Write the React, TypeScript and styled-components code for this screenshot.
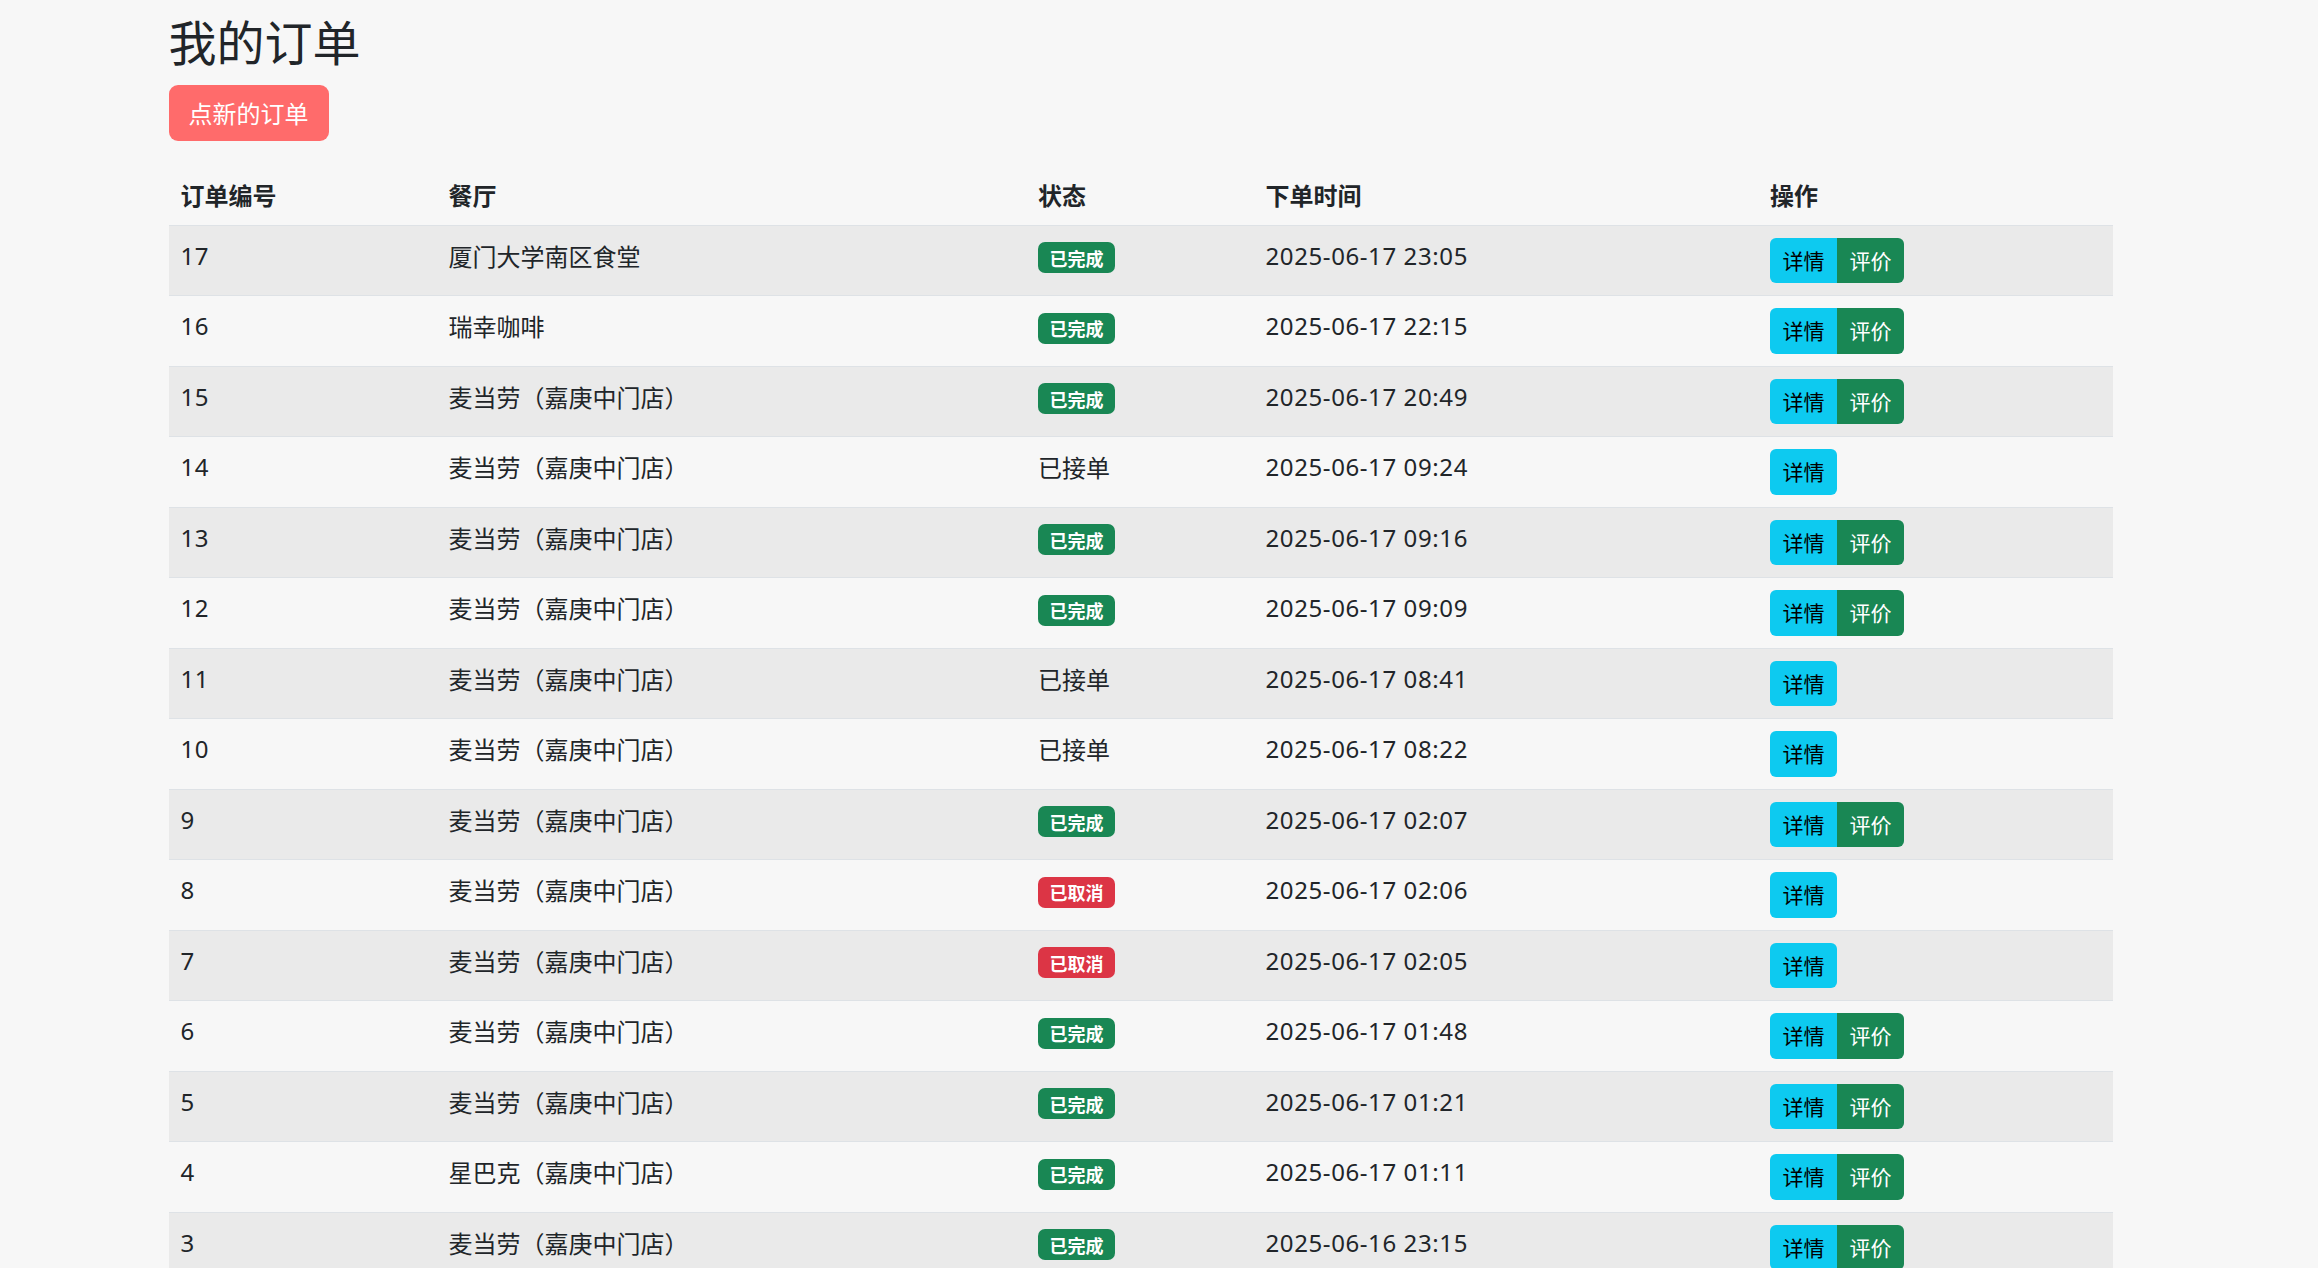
import React from "react";
import styled, { createGlobalStyle } from "styled-components";

const GlobalStyle = createGlobalStyle`
  html, body {
    margin: 0;
    padding: 0;
    background: #f7f7f7;
  }
  body {
    font-family: "Noto Sans", "Noto Sans CJK SC", sans-serif;
    color: #212529;
    font-size: 24px;
    line-height: 36px;
  }
  * { box-sizing: border-box; }
`;

const Page = styled.main`
  padding: 12px 205px 0 168.5px;
`;

const Title = styled.h2`
  margin: 0;
  font-size: 48px;
  font-weight: 400;
  line-height: 57.6px;
  font-family: "Noto Sans CJK SC", sans-serif;
  color: #212529;
`;

const NewOrderButton = styled.button`
  margin-top: 15.4px;
  display: inline-block;
  border: 0;
  border-radius: 9px;
  background: #ff6b6b;
  color: #fff;
  font-family: "Noto Sans CJK SC", sans-serif;
  font-size: 24px;
  line-height: 36px;
  padding: 10px 20px;
  cursor: pointer;
`;

const Table = styled.table`
  margin-top: 24px;
  width: 100%;
  border-collapse: collapse;
  table-layout: fixed;
`;

const HeadCell = styled.th`
  text-align: left;
  font-weight: 700;
  font-family: "Noto Sans CJK SC", sans-serif;
  padding: 12px;
  line-height: 36px;
  vertical-align: bottom;
  border-bottom: 1.5px solid #dee2e6;
`;

const Row = styled.tr<{ $striped: boolean }>`
  background: ${(p) => (p.$striped ? "#eaeaea" : "transparent")};
`;

const Cell = styled.td<{ $numeric?: boolean }>`
  padding: 12px;
  vertical-align: top;
  line-height: 36px;
  border-bottom: 1.5px solid #dee2e6;
  white-space: nowrap;
  letter-spacing: ${(p) => (p.$numeric ? "0.6px" : "normal")};
`;

const CjkText = styled.span`
  font-family: "Noto Sans CJK SC", sans-serif;
`;

const Badge = styled.span<{ $tone: "success" | "danger" }>`
  display: inline-block;
  vertical-align: middle;
  margin-top: -2px;
  font-family: "Noto Sans CJK SC", sans-serif;
  font-size: 18px;
  font-weight: 700;
  line-height: 18px;
  padding: 6.5px 11.5px;
  border-radius: 7px;
  color: #fff;
  background: ${(p) => (p.$tone === "success" ? "#198754" : "#dc3545")};
`;

const ButtonGroup = styled.div`
  display: inline-flex;
  vertical-align: top;
`;

const ActionButton = styled.button<{ $variant: "info" | "success" }>`
  border: 0;
  margin: 0;
  font-family: "Noto Sans CJK SC", sans-serif;
  font-size: 21px;
  line-height: 33.5px;
  padding: 6px 12.5px;
  cursor: pointer;
  background: ${(p) => (p.$variant === "info" ? "#0dcaf0" : "#198754")};
  color: ${(p) => (p.$variant === "info" ? "#000" : "#fff")};
  border-radius: 0;
  &:first-child {
    border-top-left-radius: 6px;
    border-bottom-left-radius: 6px;
  }
  &:last-child {
    border-top-right-radius: 6px;
    border-bottom-right-radius: 6px;
  }
`;

type Status = "done" | "accepted" | "cancelled";

interface Order {
  id: number;
  restaurant: string;
  status: Status;
  time: string;
}

const MCD = "麦当劳（嘉庚中门店）";

const orders: Order[] = [
  { id: 17, restaurant: "厦门大学南区食堂", status: "done", time: "2025-06-17 23:05" },
  { id: 16, restaurant: "瑞幸咖啡", status: "done", time: "2025-06-17 22:15" },
  { id: 15, restaurant: MCD, status: "done", time: "2025-06-17 20:49" },
  { id: 14, restaurant: MCD, status: "accepted", time: "2025-06-17 09:24" },
  { id: 13, restaurant: MCD, status: "done", time: "2025-06-17 09:16" },
  { id: 12, restaurant: MCD, status: "done", time: "2025-06-17 09:09" },
  { id: 11, restaurant: MCD, status: "accepted", time: "2025-06-17 08:41" },
  { id: 10, restaurant: MCD, status: "accepted", time: "2025-06-17 08:22" },
  { id: 9, restaurant: MCD, status: "done", time: "2025-06-17 02:07" },
  { id: 8, restaurant: MCD, status: "cancelled", time: "2025-06-17 02:06" },
  { id: 7, restaurant: MCD, status: "cancelled", time: "2025-06-17 02:05" },
  { id: 6, restaurant: MCD, status: "done", time: "2025-06-17 01:48" },
  { id: 5, restaurant: MCD, status: "done", time: "2025-06-17 01:21" },
  { id: 4, restaurant: "星巴克（嘉庚中门店）", status: "done", time: "2025-06-17 01:11" },
  { id: 3, restaurant: MCD, status: "done", time: "2025-06-16 23:15" },
  { id: 2, restaurant: MCD, status: "done", time: "2025-06-16 22:40" },
  { id: 1, restaurant: MCD, status: "done", time: "2025-06-16 21:58" },
];

const colWidths = [268, 589.5, 227.5, 504.5, 355];

function StatusView({ status }: { status: Status }) {
  if (status === "done") return <Badge $tone="success">已完成</Badge>;
  if (status === "cancelled") return <Badge $tone="danger">已取消</Badge>;
  return <CjkText>已接单</CjkText>;
}

export default function App() {
  return (
    <>
      <GlobalStyle />
      <Page>
        <Title>我的订单</Title>
        <NewOrderButton>点新的订单</NewOrderButton>
        <Table>
          <colgroup>
            {colWidths.map((w, i) => (
              <col key={i} style={{ width: w }} />
            ))}
          </colgroup>
          <thead>
            <tr>
              <HeadCell>订单编号</HeadCell>
              <HeadCell>餐厅</HeadCell>
              <HeadCell>状态</HeadCell>
              <HeadCell>下单时间</HeadCell>
              <HeadCell>操作</HeadCell>
            </tr>
          </thead>
          <tbody>
            {orders.map((o, i) => (
              <Row key={o.id} $striped={i % 2 === 0}>
                <Cell $numeric>{o.id}</Cell>
                <Cell>
                  <CjkText>{o.restaurant}</CjkText>
                </Cell>
                <Cell>
                  <StatusView status={o.status} />
                </Cell>
                <Cell $numeric>{o.time}</Cell>
                <Cell>
                  <ButtonGroup>
                    <ActionButton $variant="info">详情</ActionButton>
                    {o.status === "done" && (
                      <ActionButton $variant="success">评价</ActionButton>
                    )}
                  </ButtonGroup>
                </Cell>
              </Row>
            ))}
          </tbody>
        </Table>
      </Page>
    </>
  );
}
